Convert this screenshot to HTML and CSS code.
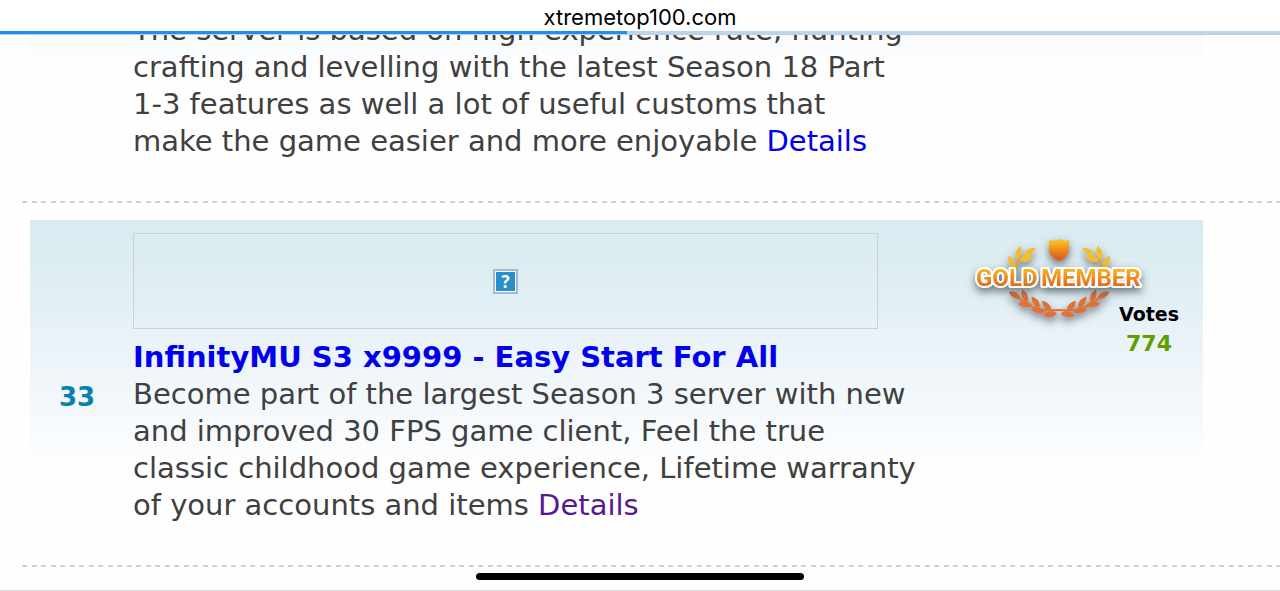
FILE: index.html
```
<!DOCTYPE html>
<html lang="en">
<head>
	<meta charset="UTF-8">
	<meta name="viewport" content="width=device-width, initial-scale=1">
	<title>xtremetop100.com</title>
	<link rel="stylesheet" href="styles.css">
</head>
<body>
	<header class="topbar">
		<div class="address">xtremetop100.com</div>
		<div class="progress"><div class="loaded"></div></div>
	</header>

	<main class="list">
		<article class="row row-first">
			<div class="rank"></div>
			<div class="info">
				<p class="desc">The server is based on high experience rate, hunting<br>
				crafting and levelling with the latest Season 18 Part<br>
				1-3 features as well a lot of useful customs that<br>
				make the game easier and more enjoyable <a href="#">Details</a></p>
			</div>
			<div class="side"></div>
		</article>
		<hr>

		<article class="row">
			<div class="rank">33</div>
			<div class="info">
				<div class="banner">
					<div class="missing">?</div>
				</div>
				<h2><a href="#">InfinityMU S3 x9999 - Easy Start For All</a></h2>
				<p class="desc">Become part of the largest Season 3 server with new<br>
				and improved 30 FPS game client, Feel the true<br>
				classic childhood game experience, Lifetime warranty<br>
				of your accounts and items <a class="visited" href="#">Details</a></p>
			</div>
			<div class="side">
				<svg class="medal" width="192" height="70" viewBox="0 0 192 70">
					<defs>
						<linearGradient id="gold" x1="0" y1="0" x2="0" y2="1">
							<stop offset="0.15" stop-color="#f9b820"/>
							<stop offset="0.9" stop-color="#df5a1c"/>
						</linearGradient>
						<filter id="shade" x="-20%" y="-20%" width="140%" height="160%">
							<feDropShadow dx="0" dy="4" stdDeviation="4" flood-color="#3c4650" flood-opacity=".75"/>
						</filter>
						<path id="leaf" d="M-7 0C-4-4 3-4 7-1C3 3-3 4-7 0Z"/>
						<!-- one half of the wreath, mirrored for the other side -->
						<g id="branch">
							<g fill="#f2bd2e">
								<use href="#leaf" transform="translate(56 20) rotate(-70)"/>
								<use href="#leaf" transform="translate(67 19) rotate(-28)"/>
								<use href="#leaf" transform="translate(63 26) rotate(-12)"/>
								<use href="#leaf" transform="translate(49 29) rotate(-110)"/>
							</g>
							<path d="M57 25Q50 36 52 50" fill="none" stroke="#e9a032" stroke-width="2"/>
							<g fill="#df7136">
								<use href="#leaf" transform="translate(52 62) rotate(-145)"/>
								<use href="#leaf" transform="translate(62 63) rotate(-105)"/>
								<use href="#leaf" transform="translate(62 71) rotate(-170)"/>
								<use href="#leaf" transform="translate(73 69) rotate(-120)"/>
								<use href="#leaf" transform="translate(75 77) rotate(-165)"/>
								<use href="#leaf" transform="translate(84 73) rotate(-125)"/>
								<use href="#leaf" transform="translate(87 81) rotate(175)"/>
							</g>
							<path d="M52 60Q66 80 96 77" fill="none" stroke="#df7136" stroke-width="2"/>
						</g>
					</defs>
					<g filter="url(#shade)">
						<path d="M86 7q5 2 10-1q5 3 10 1v11q-1 6-10 10q-9-4-10-10z" fill="url(#gold)"/>
						<use href="#branch"/>
						<use href="#branch" transform="translate(192 0) scale(-1 1)"/>
					</g>
					<g class="medal-text" filter="url(#shade)">
						<text x="13" y="53">GOLD</text>
						<text x="78" y="53">MEMBER</text>
					</g>
				</svg>
				<div class="votes">
					<span class="label">Votes</span>
					<span class="count">774</span>
				</div>
			</div>
		</article>
		<hr>
	</main>

	<div class="home-bar"></div>
</body>
</html>
```

FILE: styles.css
```
*{ box-sizing: border-box; }
body,h2,p{ margin: 0; padding: 0; }
html,body{ height: 100%; }
body{ background: #fefefe; color: #404040; font-family: Verdana, "DejaVu Sans", sans-serif; overflow: hidden; border-bottom: 1px solid #ddd; }
a{ color: #0000ee; text-decoration: none; }
a.visited{ color: #551a8b; }

/* browser bar */
.topbar{ position: fixed; top: 0; left: 0; right: 0; z-index: 2; background: #fff; }
.address{ height: 31px; padding-top: 4px; line-height: 26px; text-align: center; color: #000; font-family: Inter, "Liberation Sans", sans-serif; font-size: 22px; }
.progress{ height: 4px; background: #b8d6ef; border-bottom: 1px solid #c4cdd4; }
.loaded{ width: 49%; height: 3px; background: #1e8ff0; }

/* server list */
.list{ padding-left: 22px; }
.row{ display: grid; grid-template-columns: 103px 1fr 250px; margin-left: 8px; margin-right: 77px; padding: 13px 0 4px; background: linear-gradient(#d9eaf1, #dfeff3 30%, #e9f2f8 47%, #fcfdfe) no-repeat 0 0 / 100% 240px; }
.row-first{ padding-top: 12px; background-position: 0 -179px; }
hr{ height: 2px; margin: 1px 0 17px; border: 0; background: linear-gradient(90deg, #d2d3c8 5px, transparent 5px 10px, #d2d3c8 10px 15px, transparent 15px) 0 0 / 19px 2px; }

.rank{ align-self: center; padding-left: 29px; color: #0a80ac; font-size: 26px; font-weight: bold; }
.info{ padding-bottom: 36px; }
.row .rank{ padding-bottom: 0; }
.banner{ display: flex; align-items: center; justify-content: center; max-width: 745px; height: 96px; border: 1px solid #c8d4d4; }
.missing{ width: 25px; height: 25px; border: 2px solid #9dbbe0; outline: 1px solid #fff; outline-offset: -3px; background: #2a8fc9; color: #fff; font: bold 17px/21px "Open Sans", sans-serif; text-align: center; }
h2{ padding-top: 10px; font-size: 29px; line-height: 37px; white-space: nowrap; }
.desc{ font-size: 29px; line-height: 37px; white-space: nowrap; }

.side{ display: flex; flex-direction: column; padding-left: 10px; }
.medal{ flex: none; overflow: visible; }
.medal-text{ font: bold 24px Roboto, "Liberation Sans", sans-serif; fill: url(#gold); stroke: #fff; stroke-width: 4px; stroke-linejoin: round; paint-order: stroke; }
.votes{ display: flex; flex-direction: column; align-items: center; gap: 8px; width: 108px; margin-left: auto; line-height: 22px; font-weight: bold; position: relative; }
.label{ color: #000; font-size: 19px; }
.count{ color: #5f9f00; font-size: 22px; }

.home-bar{ position: fixed; left: 50%; bottom: 11px; width: 328px; height: 7px; margin-left: -164px; border-radius: 4px; background: #000; }
```
